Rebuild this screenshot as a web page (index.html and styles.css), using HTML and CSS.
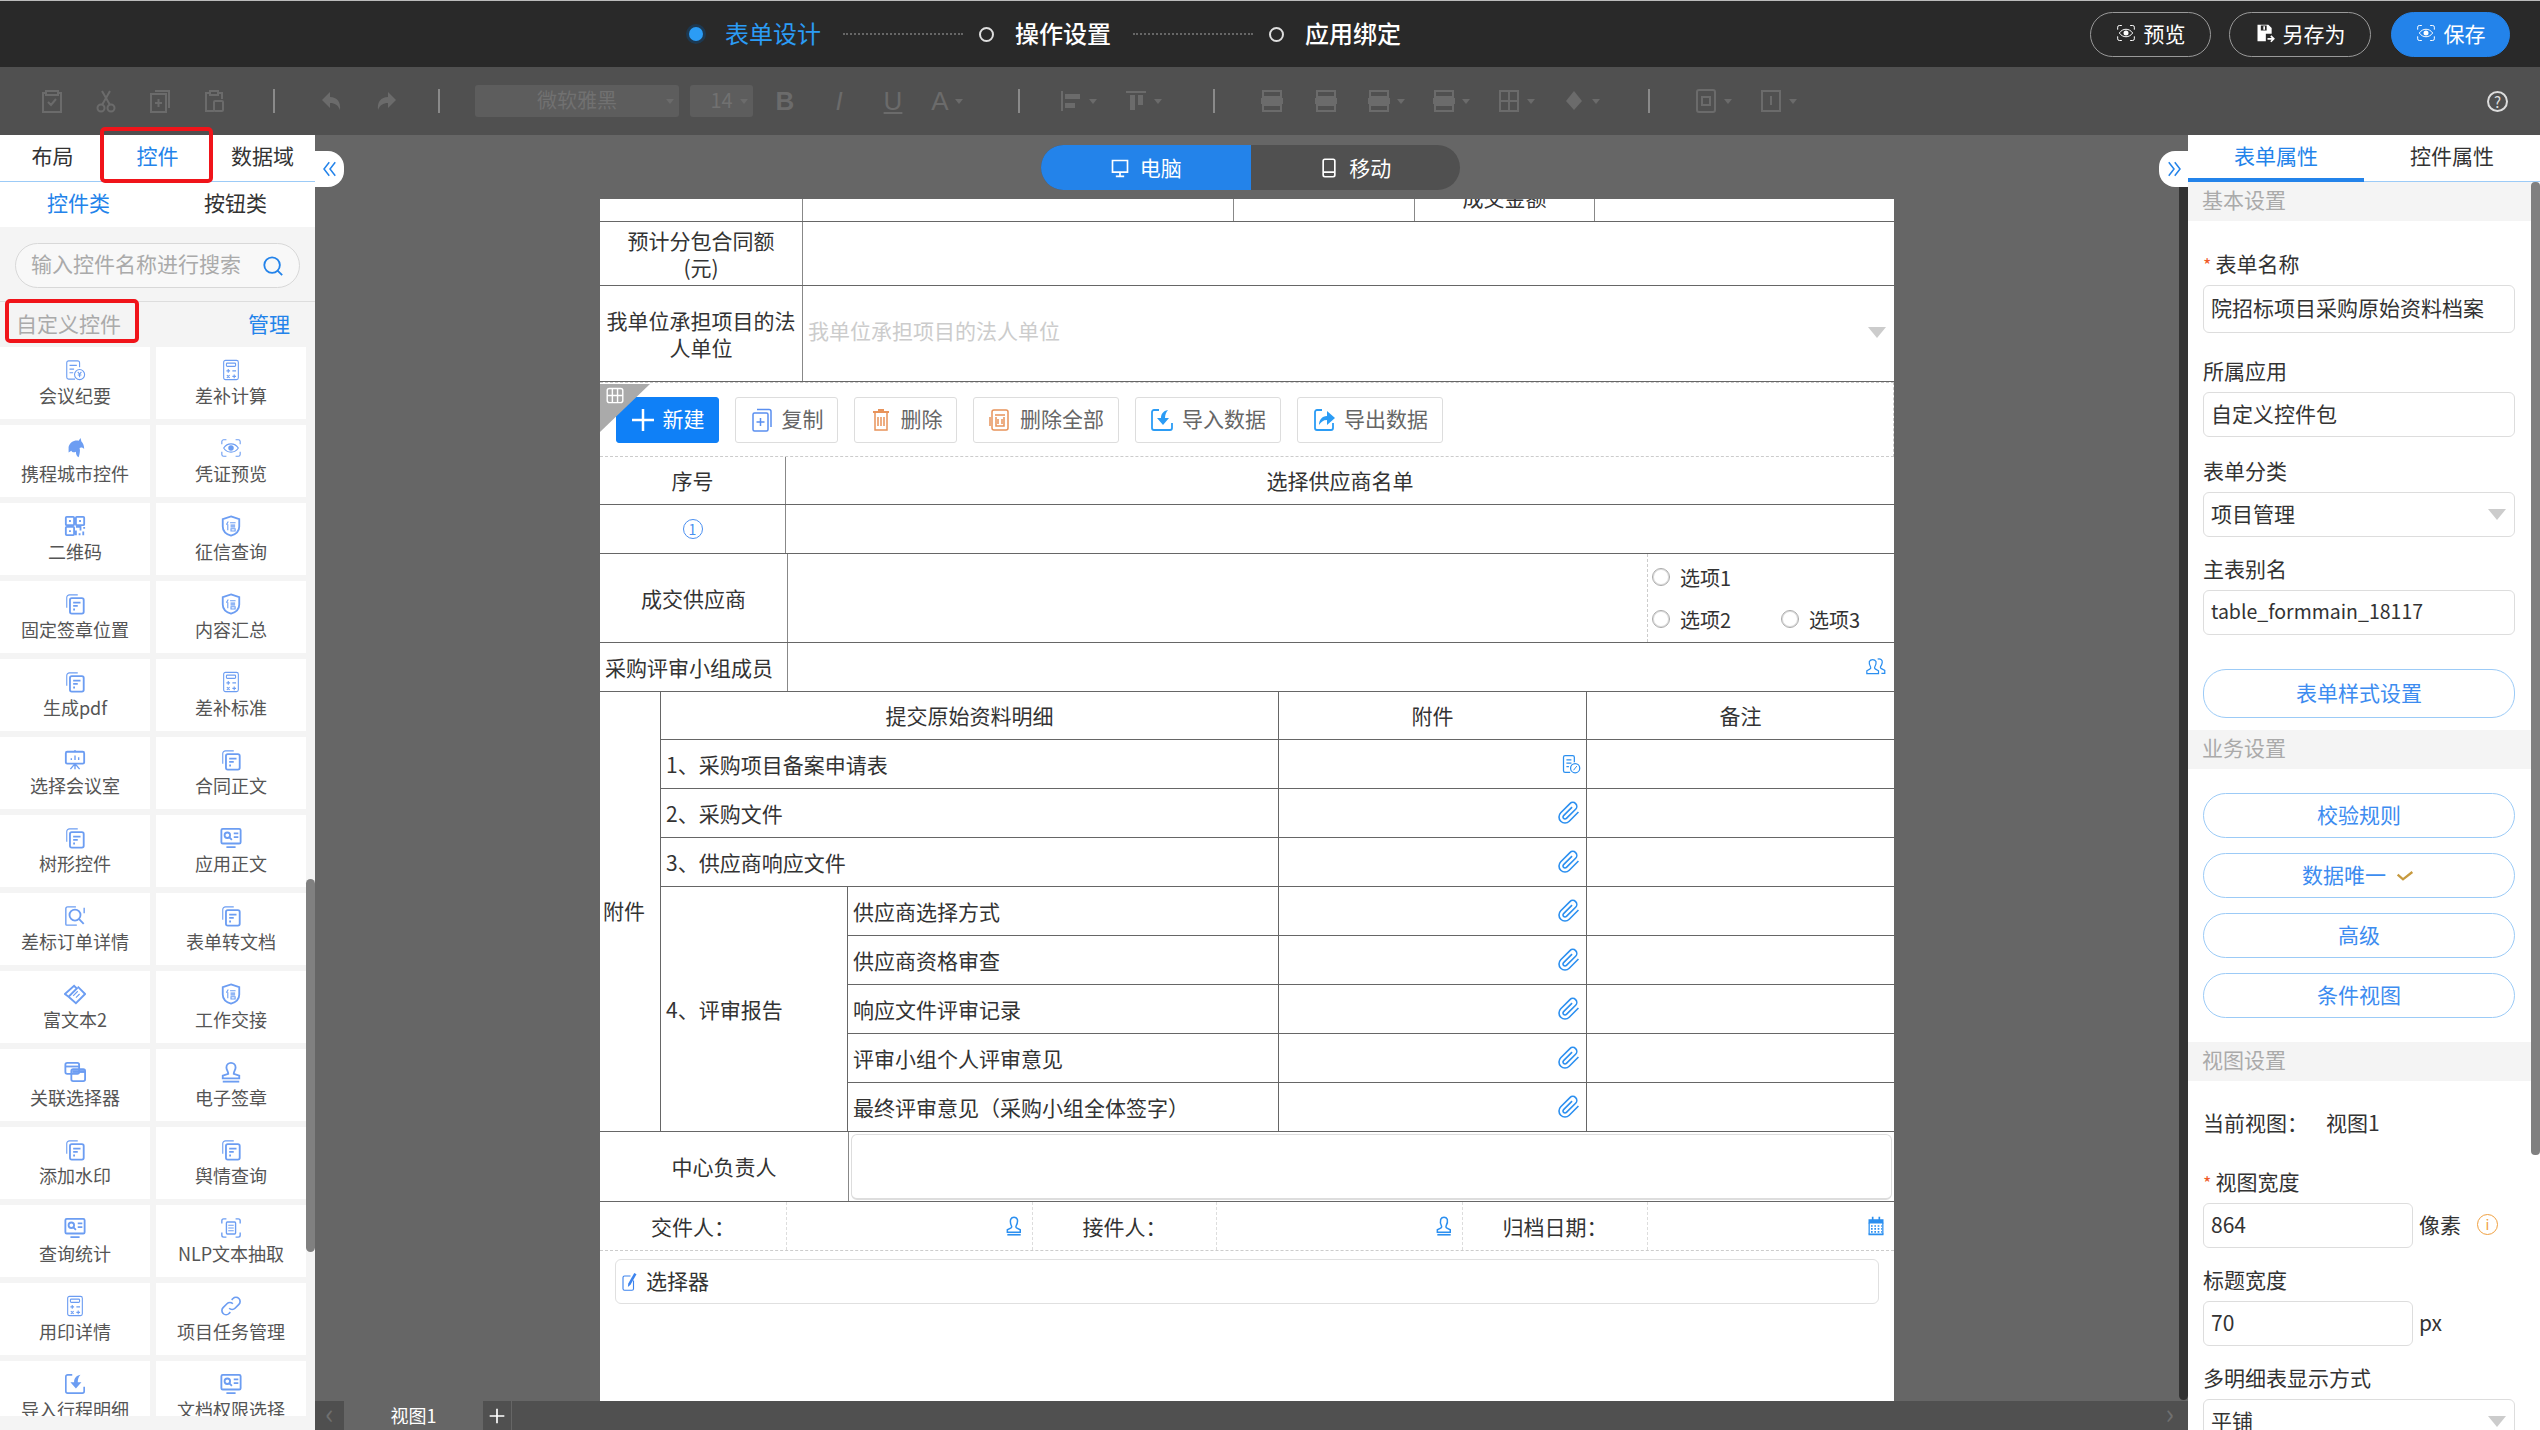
FILE: index.html
```html
<!DOCTYPE html>
<html lang="zh-CN">
  <head>
    <meta charset="UTF-8" />
    <title>表单设计</title>
    <link rel="stylesheet" href="styles.css">
  </head>
  <body>
    <!-- Icon sprite -->
    <svg class="sprite" xmlns="http://www.w3.org/2000/svg">
      <symbol id="i-doc-yen" viewBox="0 0 24 24"><path d="M17 9V4a2 2 0 0 0-2-2H5a2 2 0 0 0-2 2v16a2 2 0 0 0 2 2h7"/><path d="M6 7h8M6 11h5M6 15h4"/><circle cx="17" cy="17" r="5.5"/><path d="M15 14l2 2.5 2-2.5M17 16.5V20M15 17.5h4"/></symbol>
      <symbol id="i-calc" viewBox="0 0 24 24"><rect x="4" y="1.5" width="16" height="21" rx="2"/><rect x="7" y="4.5" width="10" height="3.5" rx="1"/><path d="M7 13h4M9 11v4M13.5 13h4M7.5 17.5l3 3M10.5 17.5l-3 3M13.5 19h4M15.5 17v4"/></symbol>
      <symbol id="i-dolphin" viewBox="0 0 24 24"><path class="solid" d="M5 11c1-5 6-8 11-7l2-3 1 4c2 2 3 5 3 8-2-2-4-2-5-1 1 3 0 7-1 10-2-1-3-3-3-6-2 1-4 1-5-1l-3 2z"/></symbol>
      <symbol id="i-eye" viewBox="0 0 24 24"><path d="M2 8V5a2 2 0 0 1 2-2h3M17 3h3a2 2 0 0 1 2 2v3M2 16v3a2 2 0 0 0 2 2h3M17 21h3a2 2 0 0 0 2-2v-3"/><path d="M4 12c4-6 12-6 16 0-4 6-12 6-16 0z"/><circle class="solid" cx="12" cy="12" r="3"/></symbol>
      <symbol id="i-qr" viewBox="0 0 24 24"><rect x="2" y="2" width="9" height="9" rx="1" stroke-width="2"/><rect x="13" y="2" width="9" height="9" rx="1" stroke-width="2"/><rect x="2" y="13" width="9" height="9" rx="1" stroke-width="2"/><path stroke-width="2" d="M13 13h5v4M22 13v2M13 17v5M17 20v2M21 18v4"/><path class="solid" d="M5.5 5.5h2v2h-2zM16.5 5.5h2v2h-2zM5.5 16.5h2v2h-2z"/></symbol>
      <symbol id="i-shield" viewBox="0 0 24 24"><path stroke-width="2" d="M12 1.5l9 3v8c0 5-4 8.500-9 10-5-1.500-9-5-9-10v-8z"/><path d="M9 7l-2 3.500M8.500 10v6.500M11 8.500h6M11.500 11h5M11.500 13h5M12 15h4.500v2.500H12z"/></symbol>
      <symbol id="i-docs" viewBox="0 0 24 24"><path d="M3 16V5a3 3 0 0 1 3-3h9"/><rect x="6.500" y="5.500" width="15" height="17" rx="2" stroke-width="2"/><path stroke-width="2" d="M10 10.500h8M10 14h5M10 18h2"/></symbol>
      <symbol id="i-screen" viewBox="0 0 24 24"><rect x="2" y="3" width="20" height="13" rx="1.500" stroke-width="2"/><path d="M12 1v2M8 12v-2M12 12V7M16 12V9M12 16l-5 6M12 16l5 6M12 16v6" stroke-width="1.500"/></symbol>
      <symbol id="i-card" viewBox="0 0 24 24"><rect x="1.500" y="2" width="21" height="16" rx="1.500" stroke-width="2"/><circle cx="8" cy="9" r="3" stroke-width="2"/><path stroke-width="2" d="M10 11l3 3M15 7h5M15 11h5M7 22h10"/></symbol>
      <symbol id="i-search-doc" viewBox="0 0 24 24"><path stroke-width="1.500" d="M13 2H4a2 2 0 0 0-2 2v17a1 1 0 0 0 1 1h11M22 9V3"/><circle cx="12" cy="11" r="6" stroke-width="2"/><path stroke-width="2" d="M16.500 15.500l5 5"/></symbol>
      <symbol id="i-diamond" viewBox="0 0 24 24"><path stroke-width="2" d="M1 12L11 3l3 3-9 9zM5 15l8 7 10-10-8-8"/><path d="M10 14l5-5M13 16l4-4"/></symbol>
      <symbol id="i-layers" viewBox="0 0 24 24"><rect x="1.500" y="2" width="15" height="12" rx="2" stroke-width="2"/><path stroke-width="2" d="M1.500 6h15"/><rect class="solid" x="9" y="10" width="14" height="3"/><rect x="8" y="9" width="15" height="13" rx="2" stroke-width="2"/></symbol>
      <symbol id="i-stamp" viewBox="0 0 24 24"><path stroke-width="2" d="M9 14c0-3-2-4-2-7a5 5 0 0 1 10 0c0 3-2 4-2 7l6 2v3H3v-3z"/><path stroke-width="2" d="M3 22.500h18"/></symbol>
      <symbol id="i-scan" viewBox="0 0 24 24"><path stroke-width="1.500" d="M2 7V4a2 2 0 0 1 2-2h3M17 2h3a2 2 0 0 1 2 2v3M2 17v3a2 2 0 0 0 2 2h3M17 22h3a2 2 0 0 0 2-2v-3"/><rect x="7" y="5.500" width="10" height="13" rx="1" stroke-width="1.500"/><path d="M9 9h6M9 12h6M9 15h6"/></symbol>
      <symbol id="i-link" viewBox="0 0 24 24"><path stroke-width="1.800" d="M10 14.500a4.500 4.500 0 0 0 6.400 0l4.200-4.300a4.500 4.500 0 0 0-6.400-6.400l-1.500 1.500"/><path stroke-width="1.800" d="M14 9.500a4.500 4.500 0 0 0-6.400 0l-4.200 4.300a4.500 4.500 0 0 0 6.400 6.400l1.500-1.500"/></symbol>
      <symbol id="i-import" viewBox="0 0 24 24"><path stroke-width="1.800" d="M9 2H4a2 2 0 0 0-2 2v16a2 2 0 0 0 2 2h16a2 2 0 0 0 2-2v-5"/><path class="solid" d="M18 2c-5 1-7 4-7 8H7l6 7 6-7h-4c0-3 1-6 3-8z"/></symbol>
      <symbol id="i-export" viewBox="0 0 24 24"><path stroke-width="1.800" d="M10 2H5a2 2 0 0 0-2 2v16a2 2 0 0 0 2 2h14a2 2 0 0 0 2-2v-5"/><path class="solid" d="M7 17c0-5 3-9 8-9V3l8 7-8 7v-5c-4 0-6 2-8 5z"/></symbol>
      <symbol id="i-copy" viewBox="0 0 24 24"><rect x="3" y="5" width="15" height="18" rx="1.500" stroke-width="1.500"/><path stroke-width="1.500" d="M7 1.500h12a2 2 0 0 1 2 2V19M6.500 14h8M10.500 10v8"/></symbol>
      <symbol id="i-trash" viewBox="0 0 24 24"><path stroke-width="1.500" d="M6 5v17h12V5M9 9v9M12 9v9M15 9v9"/><path class="solid" d="M4 3h16v2H4zM9 1h6v2H9z"/></symbol>
      <symbol id="i-trash-all" viewBox="0 0 24 24"><rect x="4" y="2" width="16" height="20" rx="2" stroke-width="1.500"/><path stroke-width="1.500" d="M8 9v9h8V9M7 7h10M10 11v5M14 11v5M2 18v-9"/></symbol>
      <symbol id="i-clip" viewBox="0 0 24 24"><path stroke-width="1.600" d="M21.440 11.050l-9.190 9.190a6 6 0 0 1-8.490-8.490l9.190-9.190a4 4 0 0 1 5.660 5.660l-9.200 9.190a2 2 0 0 1-2.830-2.830l8.490-8.480"/></symbol>
      <symbol id="i-doc-pen" viewBox="0 0 24 24"><path stroke-width="1.500" d="M11 22H5a2 2 0 0 1-2-2V4a2 2 0 0 1 2-2h9a2 2 0 0 1 2 2v6M6.500 7h6M6.500 11h6M6.500 15h3"/><circle cx="17" cy="17" r="5.500" stroke-width="1.500"/><path d="M15 19.500l4-5"/></symbol>
      <symbol id="i-user" viewBox="0 0 24 24"><path stroke-width="1.800" d="M8 4a4.500 4.500 0 0 1 8 0c.8 3-.5 6-1.500 8-.5 1 0 2 1 2.500l4 2v3H4v-3l4-2c1-.5 1.500-1.500 1-2.500-1-2-1.800-5-1-8z"/><path stroke-width="2" d="M4 22.500h16"/></symbol>
      <symbol id="i-users" viewBox="0 0 24 24"><path stroke-width="1.500" d="M4 5.500a4.500 4.500 0 0 1 8 0c.5 2.500-.5 5-1.500 6.500-.5 1 0 2 1 2.500l3.500 2v3.500H1v-3.500l3.500-2c1-.5 1.500-1.500 1-2.500C4.500 10.500 3.500 8 4 5.500z"/><path stroke-width="1.500" d="M14 2.500c3-1 6 1 5.500 4-.2 2-1 3.500-2 5-.5 1 0 2 1 2.500l4 2v3.500h-4"/></symbol>
      <symbol id="i-calendar" viewBox="0 0 24 24"><path class="solid" d="M3 4h18v5H3zM7 1h2v4H7zM15 1h2v4h-2zM3 21h18v2H3z"/><path stroke-width="1.500" d="M3.800 8v14M20.200 8v14"/><path stroke-width="2" stroke-dasharray="2 2" d="M6 12h13M6 15.500h13M6 19h13"/></symbol>
      <symbol id="i-pen" viewBox="0 0 24 24"><path stroke-width="1.500" d="M14 4H6a2 2 0 0 0-2 2v15a2 2 0 0 0 2 2h10a2 2 0 0 0 2-2V10"/><path class="solid" d="M19 0l3 1.500-8 14-3.500 3 .5-4.500z"/></symbol>
      <symbol id="i-monitor" viewBox="0 0 24 24"><path stroke-width="2" d="M3 3h18v14H3zM12 17v5M7 22h10"/></symbol>
      <symbol id="i-phone" viewBox="0 0 24 24"><rect x="5" y="1.500" width="14" height="21" rx="2" stroke-width="2"/><path stroke-width="2" d="M5 17h14"/></symbol>
      <symbol id="i-save-as" viewBox="0 0 24 24"><path class="solid" d="M3 2h13l4 4v7h-7v9H3zM7 3v6h7V3zM10 4h2v4h-2z" fill-rule="evenodd"/><path stroke-width="2" d="M15 19h7M19 15.500l3.500 3.500-3.500 3.500"/></symbol>
      <symbol id="i-search" viewBox="0 0 24 24"><circle cx="11" cy="11" r="8.500" stroke-width="2"/><path stroke-width="2" d="M17 17l5 5"/></symbol>
      <symbol id="i-plus" viewBox="0 0 24 24"><path stroke-width="2.500" d="M12 1v22M1 12h22"/></symbol>
      <symbol id="i-chev-l" viewBox="0 0 24 24"><path stroke-width="2" d="M11 3l-7 9 7 9M19 3l-7 9 7 9"/></symbol>
      <symbol id="i-chev-r" viewBox="0 0 24 24"><path stroke-width="2" d="M5 3l7 9-7 9M13 3l7 9-7 9"/></symbol>
      <symbol id="i-check" viewBox="0 0 24 24"><path stroke-width="3.500" d="M1 10l8 7L23 6"/></symbol>
      <symbol id="i-grid" viewBox="0 0 24 24"><rect x="1" y="2" width="22" height="20" rx="3" stroke-width="2"/><path stroke-width="2" d="M1 12h22M8.300 2v20M15.600 2v20"/></symbol>
      <symbol id="t-paste" viewBox="0 0 24 24"><path stroke-width="2" d="M6 4H3v19h18V4h-3M6 2h12v4H6zM8 13l3 3 5-6"/></symbol>
      <symbol id="t-cut" viewBox="0 0 24 24"><circle cx="7" cy="19" r="3.500" stroke-width="2"/><circle cx="17" cy="19" r="3.500" stroke-width="2"/><path stroke-width="2" d="M8 16L16 2M16 16L8 2"/></symbol>
      <symbol id="t-add" viewBox="0 0 24 24"><rect x="3" y="5" width="15" height="18" stroke-width="2"/><path stroke-width="2" d="M7 2h14v17M7 14h7M10.500 10v8"/></symbol>
      <symbol id="t-clip" viewBox="0 0 24 24"><path stroke-width="2" d="M8 4H4v18h8M16 4h4v6M8 2h8v4H8z"/><rect x="12" y="12" width="9" height="10" rx="1" stroke-width="2"/></symbol>
      <symbol id="t-undo" viewBox="0 0 24 24"><path class="solid" d="M10 3L2 11l8 8v-5c5 0 8 2 10 7 1-8-3-13-10-13z"/></symbol>
      <symbol id="t-redo" viewBox="0 0 24 24"><path class="solid" d="M14 3l8 8-8 8v-5c-5 0-8 2-10 7-1-8 3-13 10-13z"/></symbol>
      <symbol id="t-align" viewBox="0 0 24 24"><path stroke-width="2" d="M3 2v20"/><path class="solid" d="M6 5h15v5H6zM6 14h10v5H6z"/></symbol>
      <symbol id="t-valign" viewBox="0 0 24 24"><path stroke-width="2" d="M2 3h20"/><path class="solid" d="M6 6h5v15H6zM14 6h5v10h-5z"/></symbol>
      <symbol id="t-merge" viewBox="0 0 24 24"><path stroke-width="2" d="M3 2h18v6H3zM3 16h18v6H3z"/><path class="solid" d="M1 9h22v6H1z"/></symbol>
      <symbol id="t-table" viewBox="0 0 24 24"><rect x="3" y="2" width="18" height="20" stroke-width="2"/><path stroke-width="2" d="M12 2v20M3 12h18"/></symbol>
      <symbol id="t-fill" viewBox="0 0 24 24"><path class="solid" d="M12 2l8 10-8 9-8-9z"/></symbol>
      <symbol id="t-box" viewBox="0 0 24 24"><rect x="3" y="1" width="18" height="22" rx="2" stroke-width="2"/><path stroke-width="2" d="M8 8h8v8H8z"/></symbol>
      <symbol id="t-frame" viewBox="0 0 24 24"><path stroke-width="2" d="M3 2h18v20H3zM12 7v9"/></symbol>
    </svg>

    <div class="app">
      <!-- Top bar -->
      <header class="topbar">
        <div class="steps">
          <span class="step-dot"></span>
          <span class="step-name active">表单设计</span>
          <span class="step-line"></span>
          <span class="step-ring"></span>
          <span class="step-name">操作设置</span>
          <span class="step-line"></span>
          <span class="step-ring"></span>
          <span class="step-name">应用绑定</span>
        </div>
        <div class="top-actions">
          <button class="top-btn btn-preview"><svg class="ico-20"><use href="#i-eye"/></svg>预览</button>
          <button class="top-btn btn-saveas"><svg class="ico-20"><use href="#i-save-as"/></svg>另存为</button>
          <button class="top-btn btn-save"><svg class="ico-20"><use href="#i-eye"/></svg>保存</button>
        </div>
      </header>

      <!-- Toolbar (disabled) -->
      <div class="toolbar">
        <div class="tg tg-edit">
          <span class="slot"><svg class="ico-t"><use href="#t-paste"/></svg></span>
          <span class="slot"><svg class="ico-t"><use href="#t-cut"/></svg></span>
          <span class="slot"><svg class="ico-t"><use href="#t-add"/></svg></span>
          <span class="slot"><svg class="ico-t"><use href="#t-clip"/></svg></span>
        </div>
        <i class="sep"></i>
        <div class="tg tg-undo">
          <span class="slot"><svg class="ico-t"><use href="#t-undo"/></svg></span>
          <span class="slot"><svg class="ico-t"><use href="#t-redo"/></svg></span>
        </div>
        <i class="sep"></i>
        <div class="tg tg-font">
          <span class="font-box font-family">微软雅黑<i class="caret"></i></span>
          <span class="font-box font-size">14<i class="caret"></i></span>
          <span class="slot glyph bold">B</span>
          <span class="slot glyph italic">I</span>
          <span class="slot glyph under">U</span>
          <span class="slot glyph">A<i class="caret"></i></span>
        </div>
        <i class="sep"></i>
        <div class="tg tg-align">
          <span class="slot wide"><svg class="ico-t"><use href="#t-align"/></svg><i class="caret"></i></span>
          <span class="slot wide"><svg class="ico-t"><use href="#t-valign"/></svg><i class="caret"></i></span>
        </div>
        <i class="sep"></i>
        <div class="tg tg-table">
          <span class="slot"><svg class="ico-t"><use href="#t-merge"/></svg></span>
          <span class="slot"><svg class="ico-t"><use href="#t-merge"/></svg></span>
          <span class="slot wide"><svg class="ico-t"><use href="#t-merge"/></svg><i class="caret"></i></span>
          <span class="slot wide"><svg class="ico-t"><use href="#t-merge"/></svg><i class="caret"></i></span>
          <span class="slot wide"><svg class="ico-t"><use href="#t-table"/></svg><i class="caret"></i></span>
          <span class="slot wide"><svg class="ico-t"><use href="#t-fill"/></svg><i class="caret"></i></span>
        </div>
        <i class="sep"></i>
        <div class="tg tg-box">
          <span class="slot wide"><svg class="ico-t"><use href="#t-box"/></svg><i class="caret"></i></span>
          <span class="slot wide"><svg class="ico-t"><use href="#t-frame"/></svg><i class="caret"></i></span>
        </div>
        <span class="help">?</span>
      </div>

      <div class="workspace">
        <!-- Left panel -->
        <aside class="left-panel">
          <div class="left-tabs">
            <span class="left-tab">布局</span>
            <span class="left-tab active">控件</span>
            <span class="left-tab">数据域</span>
          </div>
          <div class="sub-tabs">
            <span class="sub-tab active">控件类</span>
            <span class="sub-tab">按钮类</span>
          </div>
          <div class="search-wrap">
            <div class="search-box">
              <span>输入控件名称进行搜索</span>
              <svg class="ico-search"><use href="#i-search"/></svg>
            </div>
          </div>
          <div class="custom-row">
            <span class="custom-title">自定义控件</span>
            <span class="custom-manage">管理</span>
          </div>
          <div class="card-list">
            <div class="card"><svg class="ico-card"><use href="#i-doc-yen"/></svg><span>会议纪要</span></div>
            <div class="card"><svg class="ico-card"><use href="#i-calc"/></svg><span>差补计算</span></div>
            <div class="card"><svg class="ico-card"><use href="#i-dolphin"/></svg><span>携程城市控件</span></div>
            <div class="card"><svg class="ico-card"><use href="#i-eye"/></svg><span>凭证预览</span></div>
            <div class="card"><svg class="ico-card"><use href="#i-qr"/></svg><span>二维码</span></div>
            <div class="card"><svg class="ico-card"><use href="#i-shield"/></svg><span>征信查询</span></div>
            <div class="card"><svg class="ico-card"><use href="#i-docs"/></svg><span>固定签章位置</span></div>
            <div class="card"><svg class="ico-card"><use href="#i-shield"/></svg><span>内容汇总</span></div>
            <div class="card"><svg class="ico-card"><use href="#i-docs"/></svg><span>生成pdf</span></div>
            <div class="card"><svg class="ico-card"><use href="#i-calc"/></svg><span>差补标准</span></div>
            <div class="card"><svg class="ico-card"><use href="#i-screen"/></svg><span>选择会议室</span></div>
            <div class="card"><svg class="ico-card"><use href="#i-docs"/></svg><span>合同正文</span></div>
            <div class="card"><svg class="ico-card"><use href="#i-docs"/></svg><span>树形控件</span></div>
            <div class="card"><svg class="ico-card"><use href="#i-card"/></svg><span>应用正文</span></div>
            <div class="card"><svg class="ico-card"><use href="#i-search-doc"/></svg><span>差标订单详情</span></div>
            <div class="card"><svg class="ico-card"><use href="#i-docs"/></svg><span>表单转文档</span></div>
            <div class="card"><svg class="ico-card"><use href="#i-diamond"/></svg><span>富文本2</span></div>
            <div class="card"><svg class="ico-card"><use href="#i-shield"/></svg><span>工作交接</span></div>
            <div class="card"><svg class="ico-card"><use href="#i-layers"/></svg><span>关联选择器</span></div>
            <div class="card"><svg class="ico-card"><use href="#i-stamp"/></svg><span>电子签章</span></div>
            <div class="card"><svg class="ico-card"><use href="#i-docs"/></svg><span>添加水印</span></div>
            <div class="card"><svg class="ico-card"><use href="#i-docs"/></svg><span>舆情查询</span></div>
            <div class="card"><svg class="ico-card"><use href="#i-card"/></svg><span>查询统计</span></div>
            <div class="card"><svg class="ico-card"><use href="#i-scan"/></svg><span>NLP文本抽取</span></div>
            <div class="card"><svg class="ico-card"><use href="#i-calc"/></svg><span>用印详情</span></div>
            <div class="card"><svg class="ico-card"><use href="#i-link"/></svg><span>项目任务管理</span></div>
            <div class="card"><svg class="ico-card"><use href="#i-import"/></svg><span>导入行程明细</span></div>
            <div class="card"><svg class="ico-card"><use href="#i-card"/></svg><span>文档权限选择</span></div>
          </div>
          <div class="left-thumb"></div>
          <div class="red-mark mark-tab"></div>
          <div class="red-mark mark-custom"></div>
        </aside>

        <!-- Canvas -->
        <main class="canvas">
          <span class="edge-handle handle-left"><svg class="ico-chev"><use href="#i-chev-l"/></svg></span>
          <span class="edge-handle handle-right"><svg class="ico-chev"><use href="#i-chev-r"/></svg></span>
          <div class="canvas-thumb"></div>

          <div class="view-switch">
            <span class="switch-item active"><svg class="ico-20"><use href="#i-monitor"/></svg>电脑</span>
            <span class="switch-item"><svg class="ico-20"><use href="#i-phone"/></svg>移动</span>
          </div>

          <div class="form">
            <div class="row row-clip">
              <div class="cell col-label"></div>
              <div class="cell clip-a"></div>
              <div class="cell clip-b"></div>
              <div class="cell clip-c"><span class="clip-text">成交金额</span></div>
              <div class="clip-d"></div>
            </div>
            <div class="row row-budget">
              <div class="cell col-label center">预计分包合同额<br>(元)</div>
              <div class="fill"></div>
            </div>
            <div class="row row-legal">
              <div class="cell col-label center">我单位承担项目的法<br>人单位</div>
              <div class="fill select-cell">
                <span class="placeholder">我单位承担项目的法人单位</span>
                <i class="tri"></i>
              </div>
            </div>

            <div class="detail-tools">
              <div class="corner"><svg class="ico-grid"><use href="#i-grid"/></svg></div>
              <button class="tool-btn primary"><svg class="ico-plus"><use href="#i-plus"/></svg>新建</button>
              <button class="tool-btn w-sm"><svg class="ico-tool c-blue"><use href="#i-copy"/></svg>复制</button>
              <button class="tool-btn w-sm"><svg class="ico-tool c-orange"><use href="#i-trash"/></svg>删除</button>
              <button class="tool-btn w-lg"><svg class="ico-tool c-orange"><use href="#i-trash-all"/></svg>删除全部</button>
              <button class="tool-btn w-lg"><svg class="ico-tool c-sky"><use href="#i-import"/></svg>导入数据</button>
              <button class="tool-btn w-lg"><svg class="ico-tool c-sky"><use href="#i-export"/></svg>导出数据</button>
            </div>

            <div class="row row-head">
              <div class="cell col-no center">序号</div>
              <div class="fill center">选择供应商名单</div>
            </div>
            <div class="row row-item">
              <div class="cell col-no center"><span class="no-badge">1</span></div>
              <div class="fill"></div>
            </div>
            <div class="row row-supplier">
              <div class="cell col-wide center">成交供应商</div>
              <div class="cell supplier-mid"></div>
              <div class="radio-box">
                <label class="radio r-one"><i></i>选项1</label>
                <label class="radio"><i></i>选项2</label>
                <label class="radio"><i></i>选项3</label>
              </div>
            </div>
            <div class="row row-team">
              <div class="cell col-wide left tight">采购评审小组成员</div>
              <div class="fill icon-end"><svg class="ico-field"><use href="#i-users"/></svg></div>
            </div>

            <div class="att-grid">
              <div class="att att-side">附件</div>
              <div class="att att-span center">提交原始资料明细</div>
              <div class="att center">附件</div>
              <div class="att att-last center">备注</div>

              <div class="att att-span">1、采购项目备案申请表</div>
              <div class="att icon-end"><svg class="ico-field"><use href="#i-doc-pen"/></svg></div>
              <div class="att att-last"></div>

              <div class="att att-span">2、采购文件</div>
              <div class="att icon-end"><svg class="ico-clip"><use href="#i-clip"/></svg></div>
              <div class="att att-last"></div>

              <div class="att att-span">3、供应商响应文件</div>
              <div class="att icon-end"><svg class="ico-clip"><use href="#i-clip"/></svg></div>
              <div class="att att-last"></div>

              <div class="att att-four">4、评审报告</div>
              <div class="att">供应商选择方式</div>
              <div class="att icon-end"><svg class="ico-clip"><use href="#i-clip"/></svg></div>
              <div class="att att-last"></div>

              <div class="att">供应商资格审查</div>
              <div class="att icon-end"><svg class="ico-clip"><use href="#i-clip"/></svg></div>
              <div class="att att-last"></div>

              <div class="att">响应文件评审记录</div>
              <div class="att icon-end"><svg class="ico-clip"><use href="#i-clip"/></svg></div>
              <div class="att att-last"></div>

              <div class="att">评审小组个人评审意见</div>
              <div class="att icon-end"><svg class="ico-clip"><use href="#i-clip"/></svg></div>
              <div class="att att-last"></div>

              <div class="att">最终评审意见（采购小组全体签字）</div>
              <div class="att icon-end"><svg class="ico-clip"><use href="#i-clip"/></svg></div>
              <div class="att att-last"></div>
            </div>

            <div class="row row-head-sign">
              <div class="cell col-sign center">中心负责人</div>
              <div class="sign-wrap"><div class="sign-box"></div></div>
            </div>
            <div class="row row-archive">
              <div class="dash-cell a-label center">交件人：</div>
              <div class="dash-cell a-field icon-end"><svg class="ico-field"><use href="#i-user"/></svg></div>
              <div class="dash-cell a-label center">接件人：</div>
              <div class="dash-cell a-field icon-end"><svg class="ico-field"><use href="#i-user"/></svg></div>
              <div class="dash-cell a-label center">归档日期：</div>
              <div class="fill icon-end"><svg class="ico-field"><use href="#i-calendar"/></svg></div>
            </div>
            <div class="selector-box"><svg class="ico-pen"><use href="#i-pen"/></svg>选择器</div>
          </div>

          <div class="view-tabs">
            <span class="vt-arrow">‹</span>
            <span class="vt-tab">视图1</span>
            <span class="vt-add"><svg class="ico-add"><use href="#i-plus"/></svg></span>
            <span class="vt-rest"><span class="vt-arrow-r">›</span></span>
          </div>
        </main>

        <!-- Right panel -->
        <aside class="right-panel">
          <div class="right-tabs">
            <span class="right-tab active">表单属性</span>
            <span class="right-tab">控件属性</span>
          </div>
          <div class="sec-title">基本设置</div>
          <div class="field first">
            <label class="field-label"><em>*</em>表单名称</label>
            <div class="input tall">院招标项目采购原始资料档案</div>
          </div>
          <div class="field second">
            <label class="field-label">所属应用</label>
            <div class="input">自定义控件包</div>
          </div>
          <div class="field">
            <label class="field-label">表单分类</label>
            <div class="input select">项目管理<i class="tri"></i></div>
          </div>
          <div class="field fourth">
            <label class="field-label">主表别名</label>
            <div class="input latin">table_formmain_18117</div>
          </div>
          <div class="pill pill-style">表单样式设置</div>

          <div class="sec-title sec-biz">业务设置</div>
          <div class="pill pill-first">校验规则</div>
          <div class="pill">数据唯一<svg class="ico-check"><use href="#i-check"/></svg></div>
          <div class="pill">高级</div>
          <div class="pill">条件视图</div>

          <div class="sec-title sec-view">视图设置</div>
          <div class="current-view"><span>当前视图：</span><span>视图1</span></div>
          <div class="field view-field">
            <label class="field-label"><em>*</em>视图宽度</label>
            <div class="unit-row">
              <div class="input narrow">864</div>
              <span class="unit">像素</span>
              <span class="info">i</span>
            </div>
          </div>
          <div class="field title-field">
            <label class="field-label">标题宽度</label>
            <div class="unit-row">
              <div class="input narrow">70</div>
              <span class="unit">px</span>
            </div>
          </div>
          <div class="field title-field">
            <label class="field-label">多明细表显示方式</label>
            <div class="input select">平铺<i class="tri"></i></div>
          </div>
          <div class="right-thumb"></div>
        </aside>
      </div>
    </div>
  </body>
</html>
```

FILE: styles.css
```css
* {
  box-sizing: border-box;
}

html,
body {
  margin: 0;
  padding: 0;
  height: 100%;
  overflow: hidden;
}

body {
  font-family: "Noto Sans CJK SC", "Noto Sans", sans-serif;
  font-size: 21px;
  color: #333;
  background: #666;
}

.sprite {
  display: none;
}

svg {
  fill: none;
  stroke: currentColor;
  stroke-width: 1.2;
  flex: none;
}

.solid {
  fill: currentColor;
  stroke: none;
}

i,
em {
  font-style: normal;
}

button {
  font-family: inherit;
  font-size: inherit;
  cursor: pointer;
}

.app {
  width: 2540px;
  height: 1430px;
  display: flex;
  flex-direction: column;
}

/* Top bar */
.topbar {
  height: 67px;
  flex: none;
  background: #292929;
  border-top: 1px solid #bbb;
  display: flex;
  align-items: center;
  padding-left: 689px;
}

.steps {
  display: flex;
  align-items: center;
  font-size: 24px;
  color: #fff;
}

.step-dot {
  width: 14px;
  height: 14px;
  margin-right: 22px;
  border-radius: 50%;
  background: #2b9cf5;
  box-shadow: 0 0 0 3px #1d3850;
}

.step-name {
  width: 96px;
  line-height: 32px;
  padding-bottom: 2px;
  font-weight: 500;
}

.step-name.active {
  color: #2b9cf5;
  font-weight: 400;
}

.step-line {
  width: 120px;
  margin: 0 16px 0 22px;
  border-top: 2px dotted #666;
}

.step-ring {
  width: 15px;
  height: 15px;
  margin-right: 21px;
  border: 2px solid #ddd;
  border-radius: 50%;
}

.top-actions {
  display: flex;
  margin-left: 689px;
}

.top-btn {
  height: 45px;
  display: flex;
  align-items: center;
  justify-content: center;
  gap: 8px;
  border: 1px solid #999;
  border-radius: 23px;
  background: transparent;
  color: #fff;
  padding: 0 0 2px;
}

.btn-preview {
  width: 121px;
}

.btn-saveas {
  width: 142px;
  margin-left: 18px;
}

.btn-save {
  width: 119px;
  margin-left: 20px;
  background: #2383ea;
  border-color: #2383ea;
}

.ico-20 {
  width: 20px;
  height: 20px;
}

/* Toolbar */
.toolbar {
  height: 68px;
  flex: none;
  background: #505050;
  display: flex;
  align-items: center;
  padding-left: 25px;
  color: #6b6b6b;
}

.tg {
  display: flex;
  align-items: center;
  flex: none;
}

.tg-edit {
  width: 248px;
}

.tg-undo {
  width: 163px;
  padding-left: 30px;
}

.tg-font {
  width: 578px;
  padding-left: 35px;
}

.tg-align {
  width: 193px;
  padding-left: 25px;
}

.tg-table {
  width: 433px;
  padding-left: 30px;
}

.tg-box {
  padding-left: 30px;
}

.sep {
  width: 2px;
  height: 24px;
  flex: none;
  background: #8a8a8a;
}

.slot {
  width: 54px;
  height: 32px;
  display: flex;
  align-items: center;
  justify-content: center;
  gap: 6px;
}

.slot.wide {
  width: 65px;
}

.ico-t {
  width: 24px;
  height: 24px;
}

.font-box {
  height: 32px;
  display: flex;
  align-items: center;
  justify-content: center;
  position: relative;
  background: #5d5d5d;
  border-radius: 3px;
  color: #717171;
  font-size: 20px;
  padding-bottom: 3px;
}

.font-family {
  width: 204px;
}

.font-size {
  width: 63px;
  margin-left: 11px;
  margin-right: 5px;
}

.font-box .caret {
  position: absolute;
  right: 5px;
  top: 14px;
}

.caret {
  width: 0;
  height: 0;
  flex: none;
  border-left: 4px solid transparent;
  border-right: 4px solid transparent;
  border-top: 5px solid #6b6b6b;
}

.glyph {
  font-family: "Liberation Sans", sans-serif;
  font-size: 26px;
}

.bold {
  font-weight: bold;
}

.italic {
  font-style: italic;
}

.under {
  text-decoration: underline;
}

.help {
  width: 21px;
  height: 21px;
  margin-left: auto;
  margin-right: 32px;
  border: 2px solid #ddd;
  border-radius: 50%;
  color: #ddd;
  font-size: 15px;
  line-height: 17px;
  text-align: center;
}

/* Workspace */
.workspace {
  flex: 1;
  display: flex;
  min-height: 0;
}

/* Left panel */
.left-panel {
  width: 315px;
  flex: none;
  position: relative;
  z-index: 3;
  background: #f4f4f4;
}

.left-tabs {
  height: 47px;
  display: flex;
  background: #fff;
  border-bottom: 1px solid #9ccbf7;
}

.left-tab {
  width: 105px;
  line-height: 41px;
  text-align: center;
}

.left-tab.active {
  color: #2383ea;
  border-bottom: 3px solid #2383ea;
  height: 47px;
}

.sub-tabs {
  height: 45px;
  display: flex;
  background: #fff;
}

.sub-tab {
  width: 157px;
  line-height: 41px;
  text-align: center;
}

.sub-tab.active {
  color: #2383ea;
}

.search-wrap {
  height: 75px;
  padding: 16px 15px 0;
  border-bottom: 1px solid #ddd;
}

.search-box {
  height: 45px;
  display: flex;
  align-items: center;
  justify-content: space-between;
  padding: 0 15px;
  background: #f8f8f8;
  border: 1px solid #d8d8d8;
  border-radius: 23px;
  color: #aaa;
}

.search-box span {
  margin-bottom: 5px;
}

.ico-search {
  width: 22px;
  height: 24px;
  color: #2383ea;
}

.custom-row {
  height: 45px;
  display: flex;
  align-items: center;
  justify-content: space-between;
  padding: 0 25px 4px 16px;
}

.custom-title {
  color: #aaa;
}

.custom-manage {
  color: #2383ea;
}

.card-list {
  width: 306px;
  height: 1069px;
  display: grid;
  grid-template-columns: 150px 150px;
  grid-auto-rows: 72px;
  gap: 6px;
  overflow: hidden;
}

.card {
  height: 72px;
  display: flex;
  flex-direction: column;
  align-items: center;
  padding-top: 12px;
  background: #fff;
  font-size: 18px;
  color: #555;
  line-height: 26px;
}

.ico-card {
  width: 22px;
  height: 22px;
  margin-bottom: 1px;
  color: #6c9df2;
}

.left-thumb {
  position: absolute;
  right: 0;
  top: 744px;
  width: 9px;
  height: 373px;
  border-radius: 5px;
  background: #808080;
}

.red-mark {
  position: absolute;
  border: 4px solid #f0141a;
  border-radius: 5px;
}

.mark-tab {
  left: 100px;
  top: -8px;
  width: 113px;
  height: 56px;
}

.mark-custom {
  left: 5px;
  top: 164px;
  width: 134px;
  height: 44px;
}

/* Canvas */
.canvas {
  flex: 1;
  min-width: 0;
  position: relative;
  display: flex;
  flex-direction: column;
  background: #666;
}

.edge-handle {
  position: absolute;
  top: 16px;
  width: 29px;
  height: 36px;
  display: flex;
  align-items: center;
  justify-content: center;
  background: #fff;
  color: #2383ea;
  z-index: 2;
}

.handle-left {
  left: 0;
  border-radius: 0 16px 16px 0;
}

.handle-right {
  right: 0;
  border-radius: 16px 0 0 16px;
}

.ico-chev {
  width: 18px;
  height: 20px;
}

.canvas-thumb {
  position: absolute;
  right: 0;
  top: 50px;
  width: 9px;
  height: 1215px;
  border-radius: 0 0 5px 5px;
  background: #333;
}

.view-switch {
  width: 419px;
  height: 45px;
  flex: none;
  margin: 10px 0 9px 726px;
  display: flex;
  border-radius: 23px;
  overflow: hidden;
  background: #505050;
  color: #fff;
}

.switch-item {
  width: 210px;
  display: flex;
  align-items: center;
  justify-content: center;
  gap: 10px;
  padding-bottom: 2px;
}

.switch-item svg {
  margin-top: 2px;
}

.switch-item.active {
  background: #2383ea;
}

/* Form */
.form {
  width: 1294px;
  flex: 1;
  min-height: 0;
  margin-left: 285px;
  background: #fff;
  overflow: hidden;
  position: relative;
}

.row {
  display: flex;
  align-items: stretch;
  border-bottom: 1px solid #666;
}

.row-clip {
  height: 23px;
}

.row-budget {
  height: 64px;
}

.row-legal {
  height: 96px;
}

.row-head {
  height: 48px;
}

.row-item {
  height: 49px;
}

.row-supplier {
  height: 89px;
}

.row-team {
  height: 49px;
}

.row-head-sign {
  height: 70px;
}

.row-archive {
  height: 49px;
  border-bottom: 1px dashed #ccc;
}

.cell {
  flex: none;
  border-right: 1px solid #888;
}

.fill {
  flex: 1;
  min-width: 0;
}

.center {
  display: flex;
  align-items: center;
  justify-content: center;
  text-align: center;
  line-height: 27px;
}

.left {
  display: flex;
  align-items: center;
}

.tight {
  padding-left: 5px;
}

.col-label {
  width: 203px;
}

.col-no {
  width: 186px;
}

.col-wide {
  width: 188px;
}

.col-sign {
  width: 249px;
}

.clip-a {
  width: 431px;
}

.clip-b {
  width: 181px;
}

.clip-c {
  width: 180px;
  text-align: center;
  color: #333;
}

.clip-d {
  flex: 1;
}

.clip-text {
  display: block;
  margin-top: -17px;
  line-height: 30px;
}

.select-cell {
  position: relative;
  display: flex;
  align-items: center;
  padding: 0 8px 0 5px;
}

.placeholder {
  color: #ccc;
  margin-bottom: 8px;
}

.tri {
  width: 0;
  height: 0;
  border-left: 9px solid transparent;
  border-right: 9px solid transparent;
  border-top: 11px solid #ccc;
}

.select-cell .tri {
  margin-left: auto;
  margin-bottom: 2px;
}

/* Detail table toolbar */
.detail-tools {
  height: 75px;
  position: relative;
  display: flex;
  align-items: flex-start;
  gap: 16px;
  padding: 14px 0 0 16px;
  border-top: 1px dashed #ccc;
  border-bottom: 1px dashed #ccc;
  border-right: 1px dashed #ccc;
  margin-bottom: 0;
}

.tool-btn {
  width: 103px;
  height: 46px;
  display: flex;
  align-items: center;
  justify-content: center;
  gap: 8px;
  padding: 0 0 4px;
  background: #fff;
  border: 1px solid #ddd;
  border-radius: 3px;
  color: #666;
}

.tool-btn svg {
  margin-top: 4px;
}

.tool-btn.primary {
  background: #0f80f7;
  border-color: #0f80f7;
  color: #fff;
}

.tool-btn.w-lg {
  width: 146px;
}

.ico-plus {
  width: 24px;
  height: 24px;
}

.ico-tool {
  width: 24px;
  height: 24px;
}

.c-blue {
  color: #5a8ff0;
}

.c-orange {
  color: #e8935a;
}

.c-sky {
  color: #2b9cf5;
}

.corner {
  position: absolute;
  left: 0;
  top: 1px;
  width: 50px;
  height: 48px;
  padding: 3px 0 0 3px;
  background: #aaa;
  clip-path: polygon(0 0, 100% 0, 0 100%);
  z-index: 1;
}

.ico-grid {
  display: block;
  width: 24px;
  height: 17px;
  color: #fff;
}

.no-badge {
  width: 20px;
  height: 20px;
  border: 1px solid #4a8ff0;
  border-radius: 50%;
  color: #4a8ff0;
  font-size: 14px;
  line-height: 18px;
  text-align: center;
}

.supplier-mid {
  width: 860px;
  border-right: 1px dashed #ccc;
}

.radio-box {
  flex: 1;
  display: flex;
  flex-wrap: wrap;
  align-content: center;
  row-gap: 12px;
  padding-left: 4px;
  font-size: 20px;
}

.radio {
  width: 129px;
  height: 30px;
  display: flex;
  align-items: center;
  gap: 10px;
}

.radio + .radio + .radio {
  width: 100px;
}

.r-one {
  width: 100%;
}

.radio i {
  width: 18px;
  height: 18px;
  border: 1px solid #aaa;
  border-radius: 50%;
  box-shadow: inset 0 0 0 1px #ddd;
}

.icon-end {
  display: flex;
  align-items: center;
  justify-content: flex-end;
  padding-right: 8px;
}

.ico-field {
  width: 20px;
  height: 22px;
  color: #2b8ff0;
}

.ico-clip {
  width: 24px;
  height: 24px;
  color: #2b8ff0;
}

/* Attachment grid */
.att-grid {
  display: grid;
  grid-template-columns: 61px 187px 431px 308px 307px;
  grid-template-rows: 48px repeat(8, 49px);
}

.att {
  display: flex;
  align-items: center;
  padding-left: 5px;
  border-right: 1px solid #666;
  border-bottom: 1px solid #666;
}

.att.center {
  padding-left: 0;
  justify-content: center;
  padding-bottom: 1px;
}

.att.icon-end {
  padding-left: 0;
  padding-right: 5px;
  justify-content: flex-end;
}

.att-side {
  grid-row: 1 / -1;
  padding-left: 3px;
  padding-bottom: 3px;
}

.att-span {
  grid-column: span 2;
}

.att-four {
  grid-row: span 5;
}

.att-last {
  border-right: none;
}

/* Sign and archive rows */
.sign-wrap {
  flex: 1;
  padding: 2px 2px 1px;
}

.sign-box {
  height: 100%;
  border: 1px solid #ddd;
  border-bottom-width: 2px;
  border-radius: 6px;
}

.dash-cell {
  flex: none;
  border-right: 1px dashed #ddd;
}

.a-label {
  width: 187px;
}

.a-label:nth-child(3) {
  width: 184px;
}

.a-label:nth-child(5) {
  width: 185px;
}

.a-field {
  width: 246px;
}

.selector-box {
  width: 1264px;
  height: 45px;
  margin: 8px 0 0 15px;
  display: flex;
  align-items: center;
  gap: 8px;
  padding: 0 0 4px 4px;
  border: 1px solid #e0e0e0;
  border-radius: 6px;
}

.ico-pen {
  width: 18px;
  height: 20px;
  margin-top: 4px;
  color: #3d84ee;
}

/* View tabs */
.view-tabs {
  height: 29px;
  flex: none;
  display: flex;
  color: #fff;
}

.vt-arrow {
  width: 29px;
  background: #4f4f4f;
  color: #707070;
  font-size: 28px;
  line-height: 22px;
  text-align: center;
}

.vt-tab {
  width: 139px;
  background: #666;
  font-size: 18px;
  line-height: 29px;
  text-align: center;
}

.vt-add {
  width: 28px;
  margin-right: 1px;
  display: flex;
  align-items: center;
  justify-content: center;
  background: #505050;
}

.ico-add {
  width: 16px;
  height: 16px;
}

.vt-rest {
  flex: 1;
  background: #505050;
  color: #707070;
  font-size: 28px;
  line-height: 22px;
  text-align: right;
  padding-right: 14px;
}

/* Right panel */
.right-panel {
  width: 352px;
  flex: none;
  position: relative;
  background: #fff;
  overflow: hidden;
  padding-right: 9px;
}

.right-tabs {
  height: 47px;
  display: flex;
  margin-right: -9px;
  border-bottom: 1px solid #9ccbf7;
}

.right-tab {
  width: 176px;
  line-height: 41px;
  text-align: center;
}

.right-tab.active {
  height: 47px;
  color: #2383ea;
  border-bottom: 4px solid #2383ea;
}

.sec-title {
  height: 39px;
  padding-left: 14px;
  background: #f4f4f4;
  color: #aaa;
  line-height: 35px;
}

.sec-biz {
  margin-top: 12px;
}

.sec-view {
  margin-top: 24px;
}

.field {
  margin: 21px 16px 0 15px;
}

.field.first {
  margin-top: 30px;
}

.field.second {
  margin-top: 25px;
}

.field.fourth {
  margin-top: 19px;
}

.field-label {
  display: block;
  height: 30px;
  margin-bottom: 4px;
  line-height: 25px;
}

.field-label em {
  color: #f05a28;
  margin-right: 4px;
  font-size: 18px;
}

.input {
  height: 45px;
  display: flex;
  align-items: center;
  padding: 0 0 4px 7px;
  border: 1px solid #ddd;
  border-radius: 6px;
}

.input.tall {
  height: 48px;
}

.input.latin {
  font-size: 19.5px;
}

.input.select {
  justify-content: space-between;
  padding-right: 8px;
}

.input.select .tri {
  margin-top: 4px;
}

.input.narrow {
  width: 210px;
  flex: none;
}

.pill {
  height: 45px;
  margin: 15px 16px 0 15px;
  display: flex;
  align-items: center;
  justify-content: center;
  gap: 8px;
  padding-bottom: 4px;
  border: 1px solid #9ccbf7;
  border-radius: 23px;
  color: #3d8cf0;
}

.pill svg {
  margin-top: 4px;
}

.pill-style {
  height: 49px;
  margin-top: 34px;
}

.pill-first {
  margin-top: 24px;
}

.ico-check {
  width: 22px;
  height: 16px;
  color: #c79a3f;
}

.current-view {
  height: 30px;
  margin: 26px 0 0 15px;
  display: flex;
  gap: 18px;
  line-height: 30px;
}

.view-field {
  margin-top: 32px;
}

.title-field {
  margin-top: 19px;
}

.title-field:last-of-type {
  margin-top: 20px;
}

.unit-row {
  display: flex;
  align-items: center;
}

.unit {
  margin: 0 0 4px 6px;
}

.info {
  width: 21px;
  height: 21px;
  margin-left: 16px;
  margin-bottom: 2px;
  border: 1px solid #f0a040;
  border-radius: 50%;
  color: #f0a040;
  font-size: 14px;
  line-height: 19px;
  text-align: center;
}

.right-thumb {
  position: absolute;
  right: 0;
  top: 47px;
  width: 9px;
  height: 973px;
  border-radius: 4px;
  background: #808080;
}
```
